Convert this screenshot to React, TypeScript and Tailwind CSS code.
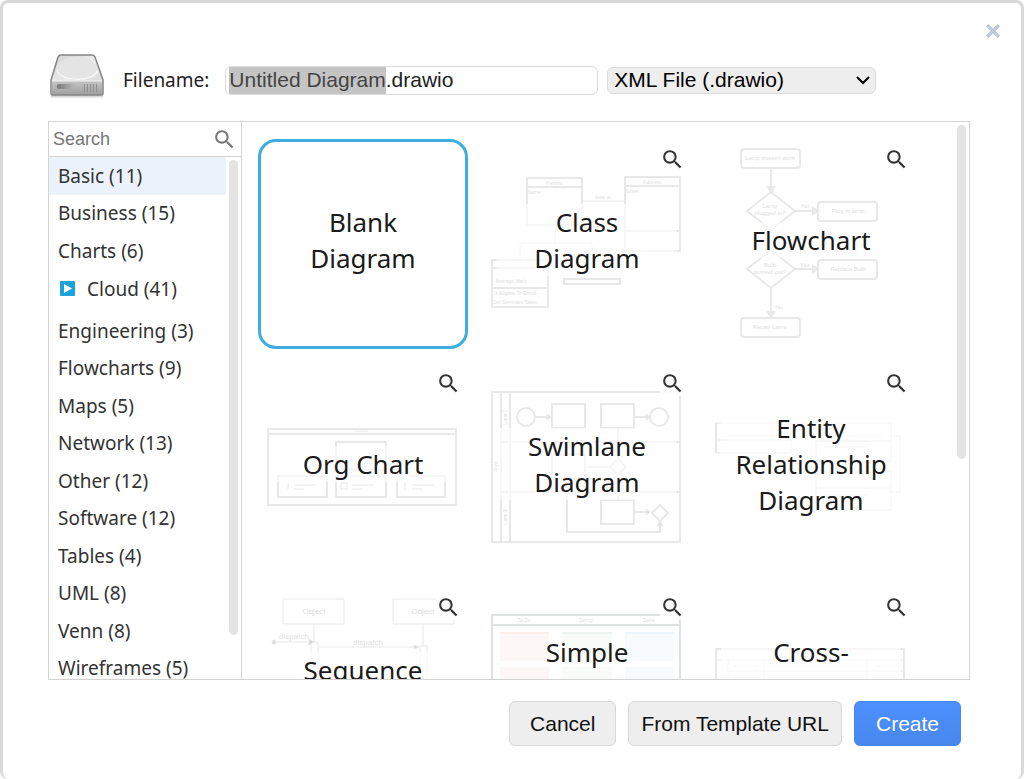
import {useEffect, useRef, useState} from "react";
import type {ReactNode} from "react";
import {MdSearch} from "react-icons/md";

type Category = {
  name: string;
  count: number;
  expandable?: boolean;
};

type Template = {
  title: string;
  thumb?: ReactNode;
};

const categories: Category[] = [
  {name: "Basic", count: 11},
  {name: "Business", count: 15},
  {name: "Charts", count: 6},
  {name: "Cloud", count: 41, expandable: true},
  {name: "Engineering", count: 3},
  {name: "Flowcharts", count: 9},
  {name: "Maps", count: 5},
  {name: "Network", count: 13},
  {name: "Other", count: 12},
  {name: "Software", count: 12},
  {name: "Tables", count: 4},
  {name: "UML", count: 8},
  {name: "Venn", count: 8},
  {name: "Wireframes", count: 5},
];

function Thumb({children}: { children: ReactNode }) {
  return (
    <svg
      viewBox="0 0 210 210"
      className="absolute inset-0 size-full"
      fill="none"
      stroke="#e8e8e8"
      strokeWidth="2"
      fontFamily="Liberation Sans, sans-serif"
      fontSize="7"
      textAnchor="middle"
      aria-hidden="true"
    >
      {children}
    </svg>
  );
}

const classThumb = (
  <Thumb>
    <path d="M45 39h55v47H45zM45 48h55M143 38h55v74h-55zM143 47h55M143 92h55"/>
    <path d="M10 121h56v47H10zM10 129h56M10 149h56M82 140h56v5H82z"/>
    <path strokeWidth="1" d="M100 62h43M73 86v18M38 121v-17h72v17"/>
    <g fill="#dedede" stroke="none" fontSize="5">
      <text x="72" y="46">Person</text>
      <text x="170" y="45">Address</text>
      <text x="52" y="55">Name</text>
      <text x="150" y="54">Street</text>
      <text x="121" y="60">lives at</text>
      <text x="29" y="144">Average Mark</text>
      <text x="33" y="156">Is Eligible To Enroll</text>
      <text x="33" y="165">Get Seminars Taken</text>
    </g>
  </Thumb>
);

const flowchartThumb = (
  <Thumb>
    <rect x="35" y="10" width="59" height="19" rx="3"/>
    <rect x="112" y="63" width="59" height="19" rx="3"/>
    <rect x="112" y="121" width="59" height="19" rx="3"/>
    <rect x="35" y="179" width="59" height="19" rx="3"/>
    <path d="M65 53l24 19-24 19-24-19zM65 111l24 19-24 19-24-19z"/>
    <path d="M65 29v21M65 149v26M89 72h20M89 130h20"/>
    <path d="M62 48h6l-3 5zM62 173h6l-3 5zM107 69v6l5-3zM107 127v6l5-3z"/>
    <g fill="#dedede" stroke="none" fontSize="6">
      <text x="64" y="21">Lamp doesn&apos;t work</text>
      <text x="64" y="69">Lamp</text>
      <text x="64" y="76">plugged in?</text>
      <text x="99" y="69">No</text>
      <text x="142" y="74">Plug in lamp</text>
      <text x="64" y="128">Bulb</text>
      <text x="64" y="135">burned out?</text>
      <text x="99" y="128">Yes</text>
      <text x="142" y="132">Replace Bulb</text>
      <text x="73" y="170">No</text>
      <text x="64" y="190">Repair Lamp</text>
    </g>
  </Thumb>
);

const orgThumb = (
  <Thumb>
    <path d="M10 66h188v76H10zM10 71h188"/>
    <path d="M78 79h50v28H78zM20 113h49v21H20zM78 113h50v21H78zM139 113h48v21h-48z"/>
    <path d="M30 120v7M83 120h6v6h-6zM147 120v7" strokeWidth="1"/>
    <path d="M36 122h22M36 126h10M94 122h22M94 126h10M154 122h22M154 126h10M97 68h13" strokeWidth="1"/>
  </Thumb>
);

const swimlaneThumb = (
  <Thumb>
    <path d="M10 29h188v150H10zM19 29v150M28 29v150M19 79h179M19 129h179"/>
    <circle cx="44" cy="54" r="9"/>
    <circle cx="177" cy="54" r="9"/>
    <path d="M70 41h33v24H70zM119 41h33v24h-33zM70 91h33v24H70zM119 137h33v24h-33z"/>
    <path d="M53 54h15M152 54h15M136 65v31M103 104h25M136 112v25M152 149h15"/>
    <path d="M136 96l8 8-8 8-8-8zM178 142l8 8-8 8-8-8z"/>
    <path d="M85 115v54h93v-10"/>
    <path d="M65 51l4 3-4 3zM164 51l4 3-4 3zM164 146l4 3-4 3zM175 163l3-5 3 5z" fill="#e2e2e2" strokeWidth="1"/>
    <g fill="#dedede" stroke="none" fontSize="5">
      <text transform="translate(25 54) rotate(-90)">Lane 1</text>
      <text transform="translate(25 154) rotate(-90)">Lane 3</text>
      <text transform="translate(16 104) rotate(-90)">Pool</text>
    </g>
  </Thumb>
);

const entityThumb = (
  <Thumb>
    <g stroke="#e6e6e6" strokeWidth="1">
      <path d="M10 60h175v18h-75M10 60v30h75v-13H10M110 78h75v20h-75zM110 108h75v39h-75zM110 125h75"/>
      <path d="M185 73h9v56h-9M20 73h60M118 73h58M118 84h44M118 132h44"/>
      <path d="M10 60v30" strokeWidth="2"/>
    </g>
  </Thumb>
);

const sequenceThumb = (
  <Thumb>
    <g strokeWidth="1">
      <path d="M25 12h61v25H25zM135 12h61v25h-61zM56 37v18M165 37v22M53 55h7v60h-7zM162 59h7v60h-7z"/>
      <path d="M18 55h36M61 60h96"/>
      <circle cx="16" cy="55" r="2" fill="#d8d8d8"/>
      <path d="M51 52l5 3-5 3zM156 58l5 2-5 2z" fill="#d8d8d8"/>
    </g>
    <g fill="#dedede" stroke="none" fontSize="8">
      <text x="56" y="27">Object</text>
      <text x="165" y="27">Object</text>
      <text x="36" y="52">dispatch</text>
      <text x="110" y="58">dispatch</text>
    </g>
  </Thumb>
);

const kanbanThumb = (
  <Thumb>
    <path d="M10 28h188v170H10zM10 38h188" stroke="#dfe2e2"/>
    <g stroke="none" fill="#faeeeb">
      <path d="M18 45h49v29H18zM18 80h49v29H18z"/>
      <path fill="#edf4ed" d="M80 45h50v29H80zM80 80h50v29H80z"/>
      <path fill="#ebf5fc" d="M143 45h49v29h-49zM143 80h49v29h-49z"/>
    </g>
    <g fill="#dedede" stroke="none" fontSize="5">
      <text x="42" y="35">To Do</text>
      <text x="104" y="35">Doing</text>
      <text x="167" y="35">Done</text>
    </g>
  </Thumb>
);

const crossThumb = (
  <Thumb>
    <path d="M10 62h188v110H10z"/>
    <path strokeWidth="1" d="M10 73h188M22 84h176M22 73v90M58 73v90M161 73v30M27 79h26M170 79h20M28 90h24v12H28z"/>
  </Thumb>
);

const templates: Template[] = [
  {title: "Blank Diagram"},
  {title: "Class Diagram", thumb: classThumb},
  {title: "Flowchart", thumb: flowchartThumb},
  {title: "Org Chart", thumb: orgThumb},
  {title: "Swimlane Diagram", thumb: swimlaneThumb},
  {title: "Entity Relationship Diagram", thumb: entityThumb},
  {title: "Sequence Diagram", thumb: sequenceThumb},
  {title: "Simple Kanban Board", thumb: kanbanThumb},
  {title: "Cross-Functional Flowchart", thumb: crossThumb},
];

function DriveIcon() {
  return (
    <svg viewBox="0 0 56 44" className="h-11 w-14 shrink-0 self-start" aria-hidden="true">
      <defs>
        <linearGradient id="lid" x1="0" y1="0" x2="1" y2="1">
          <stop offset="0" stopColor="#d2d2d2"/>
          <stop offset="0.5" stopColor="#ececec"/>
          <stop offset="1" stopColor="#d0d0d0"/>
        </linearGradient>
        <linearGradient id="front" x1="0" y1="0" x2="0" y2="1">
          <stop offset="0" stopColor="#c4c4c4"/>
          <stop offset="1" stopColor="#a0a0a0"/>
        </linearGradient>
        <linearGradient id="slot" x1="0" y1="0" x2="1" y2="0">
          <stop offset="0" stopColor="#777777"/>
          <stop offset="1" stopColor="#b8b8b8"/>
        </linearGradient>
      </defs>
      <path d="M3 42h50" stroke="#d8d8d8" strokeWidth="3" strokeLinecap="round"/>
      <path d="M12 1h31q2 0 3 2l8 23v13q0 2-2 2H4q-2 0-2-2V26l7-23q1-2 3-2z" fill="url(#lid)"/>
      <ellipse cx="28" cy="14.500" rx="20" ry="11.500" fill="#e4e4e4"/>
      <path d="M8 16c2 12 37 13 41 0" fill="none" stroke="#f6f6f6" strokeWidth="1.500"/>
      <path d="M3 27h50v12q0 2-2 2H5q-2 0-2-2z" fill="url(#front)"/>
      <path d="M3 27h50" stroke="#f0f0f0"/>
      <rect x="8" y="30" width="17" height="5" rx="2" fill="url(#slot)"/>
      <path d="M35.500 30v8M38.500 30v8M41.500 30v8M44.500 30v8M47.500 30v8" stroke="#8d8d8d"/>
      <path
        d="M12 1h31q2 0 3 2l8 23v13q0 2-2 2H4q-2 0-2-2V26l7-23q1-2 3-2z"
        fill="none"
        stroke="#858585"
        strokeWidth="1.500"
      />
    </svg>
  );
}

export default function App() {
  const [filename, setFilename] = useState("Untitled Diagram.drawio");
  const [category, setCategory] = useState("Basic");
  const [selected, setSelected] = useState("Blank Diagram");
  const inputRef = useRef<HTMLInputElement>(null);

  // Preselect the name without its extension
  useEffect(() => {
    const input = inputRef.current;
    if (!input) return;
    input.focus();
    input.setSelectionRange(0, input.value.lastIndexOf("."));
  }, []);

  return (
    <div
      role="dialog"
      aria-label="New diagram"
      className="relative flex h-screen min-h-[480px] flex-col rounded-lg border-x-3 border-t-3 border-[#d9d9d9] bg-white pr-[51px] pl-[45px] font-['Liberation_Sans',sans-serif]"
    >
      <button type="button" aria-label="Close" className="absolute top-4 right-4 flex size-6 items-center justify-center">
        <svg viewBox="0 0 12 12" className="size-[14px]" stroke="#bccadb" strokeWidth="3" aria-hidden="true">
          <path d="M1 1l10 10M11 1L1 11"/>
        </svg>
      </button>

      {/* File name and type */}
      <div className="mt-[51px] flex h-[52px] items-center pl-px">
        <DriveIcon/>
        <label htmlFor="filename" className="mr-4 ml-[18px] font-['Noto_Sans',sans-serif] text-[19px] text-[#222]">
          Filename:
        </label>
        <input
          id="filename"
          ref={inputRef}
          value={filename}
          onChange={(e) => setFilename(e.target.value)}
          className="h-[29px] w-[373px] rounded-md border border-[#dcdcdc] px-[3px] text-[21px] text-[#222] outline-none selection:bg-[#c4c4c4] selection:text-[#444]"
        />
        <div className="relative ml-[9px]">
          <select
            aria-label="File type"
            className="block h-[27px] w-[269px] appearance-none rounded-md border border-[#dcdcdc] bg-[#eeeeee] pl-[6px] text-[21px] leading-6 text-black"
          >
            <option>XML File (.drawio)</option>
          </select>
          <svg
            viewBox="0 0 14 10"
            className="pointer-events-none absolute top-2 right-[6px] h-[10px] w-[14px]"
            fill="none"
            stroke="black"
            strokeWidth="2"
            aria-hidden="true"
          >
            <path d="M1 2l6 6 6-6"/>
          </svg>
        </div>
      </div>

      <div className="mt-[15px] flex min-h-0 flex-1 border border-[#d3d3d3] font-['Noto_Sans',sans-serif]">
        {/* Categories */}
        <aside className="flex w-[193px] shrink-0 flex-col overflow-hidden border-r border-[#d3d3d3]">
          <div className="flex h-[35px] shrink-0 items-center border-b border-[#d3d3d3] px-1">
            <input
              type="search"
              aria-label="Search templates"
              placeholder="Search"
              className="min-w-0 flex-1 font-['Liberation_Sans',sans-serif] text-lg outline-none placeholder:text-[#757575]"
            />
            <MdSearch size={25} className="text-[#777]"/>
          </div>
          <div className="flex min-h-0 flex-1">
            <ul className="flex h-[530px] flex-1 flex-col">
              {categories.map((item) => (
                <li key={item.name} className={`flex grow ${item.expandable ? "basis-[42px] pb-1" : "basis-[37px]"}`}>
                  <button
                    type="button"
                    onClick={() => setCategory(item.name)}
                    className={`flex flex-1 items-center pl-[9px] text-[19px] whitespace-nowrap text-[#333] ${
                      item.name === category ? "bg-[#ebf2fb]" : ""
                    }`}
                  >
                    {item.expandable && (
                      <svg viewBox="0 0 15 15" className="mr-3 ml-[2px] size-[15px]" aria-hidden="true">
                        <rect width="15" height="15" rx="1" fill="#1ba1dc"/>
                        <path d="M4 3l8 4.500-8 4.500z" fill="white"/>
                      </svg>
                    )}
                    {item.name} ({item.count})
                  </button>
                </li>
              ))}
            </ul>
            <div className="w-[15px] pt-[3px] pl-[3px]">
              <div className="h-[475px] w-[9px] rounded-full bg-[#e3e3e3]"/>
            </div>
          </div>
        </aside>

        {/* Templates */}
        <div className="flex min-w-0 flex-1 overflow-hidden">
          <div className="flex flex-1 flex-wrap content-start gap-[14px] pt-[17px] pl-4">
            {templates.map((item) => (
              <div
                key={item.title}
                className={`relative size-[210px] rounded-[18px] border-3 ${
                  item.title === selected ? "border-[#3daee0]" : "border-transparent"
                }`}
              >
                <div className="absolute -inset-[3px]">{item.thumb}</div>
                <button
                  type="button"
                  onClick={() => setSelected(item.title)}
                  className="relative flex size-full items-center justify-center px-3 pb-2"
                >
                  <span className="w-full bg-white/60 px-2 text-[26px] leading-9 text-[#1a1a1a]">{item.title}</span>
                </button>
                {item.thumb && (
                  <button
                    type="button"
                    aria-label={`Preview ${item.title}`}
                    className="absolute top-[5px] right-1 bg-white/80 text-[#333]"
                  >
                    <MdSearch size={25}/>
                  </button>
                )}
              </div>
            ))}
          </div>
          <div className="w-3 shrink-0 pt-[3px]">
            <div className="h-[334px] w-[9px] rounded-full bg-[#e3e3e3]"/>
          </div>
        </div>
      </div>

      <div className="mt-[21px] mb-[33px] flex shrink-0 justify-end gap-3 pr-[9px] text-[21px]">
        <button type="button" className="h-[45px] rounded-md border border-[#d8d8d8] bg-[#eeeeee] px-5 text-[#111]">
          Cancel
        </button>
        <button type="button" className="h-[45px] rounded-md border border-[#d8d8d8] bg-[#eeeeee] px-3 text-[#111]">
          From Template URL
        </button>
        <button
          type="button"
          className="h-[45px] rounded-md border border-[#4787ed] bg-linear-to-b from-[#4d90fe] to-[#4787ed] px-[21px] text-white"
        >
          Create
        </button>
      </div>
    </div>
  );
}
